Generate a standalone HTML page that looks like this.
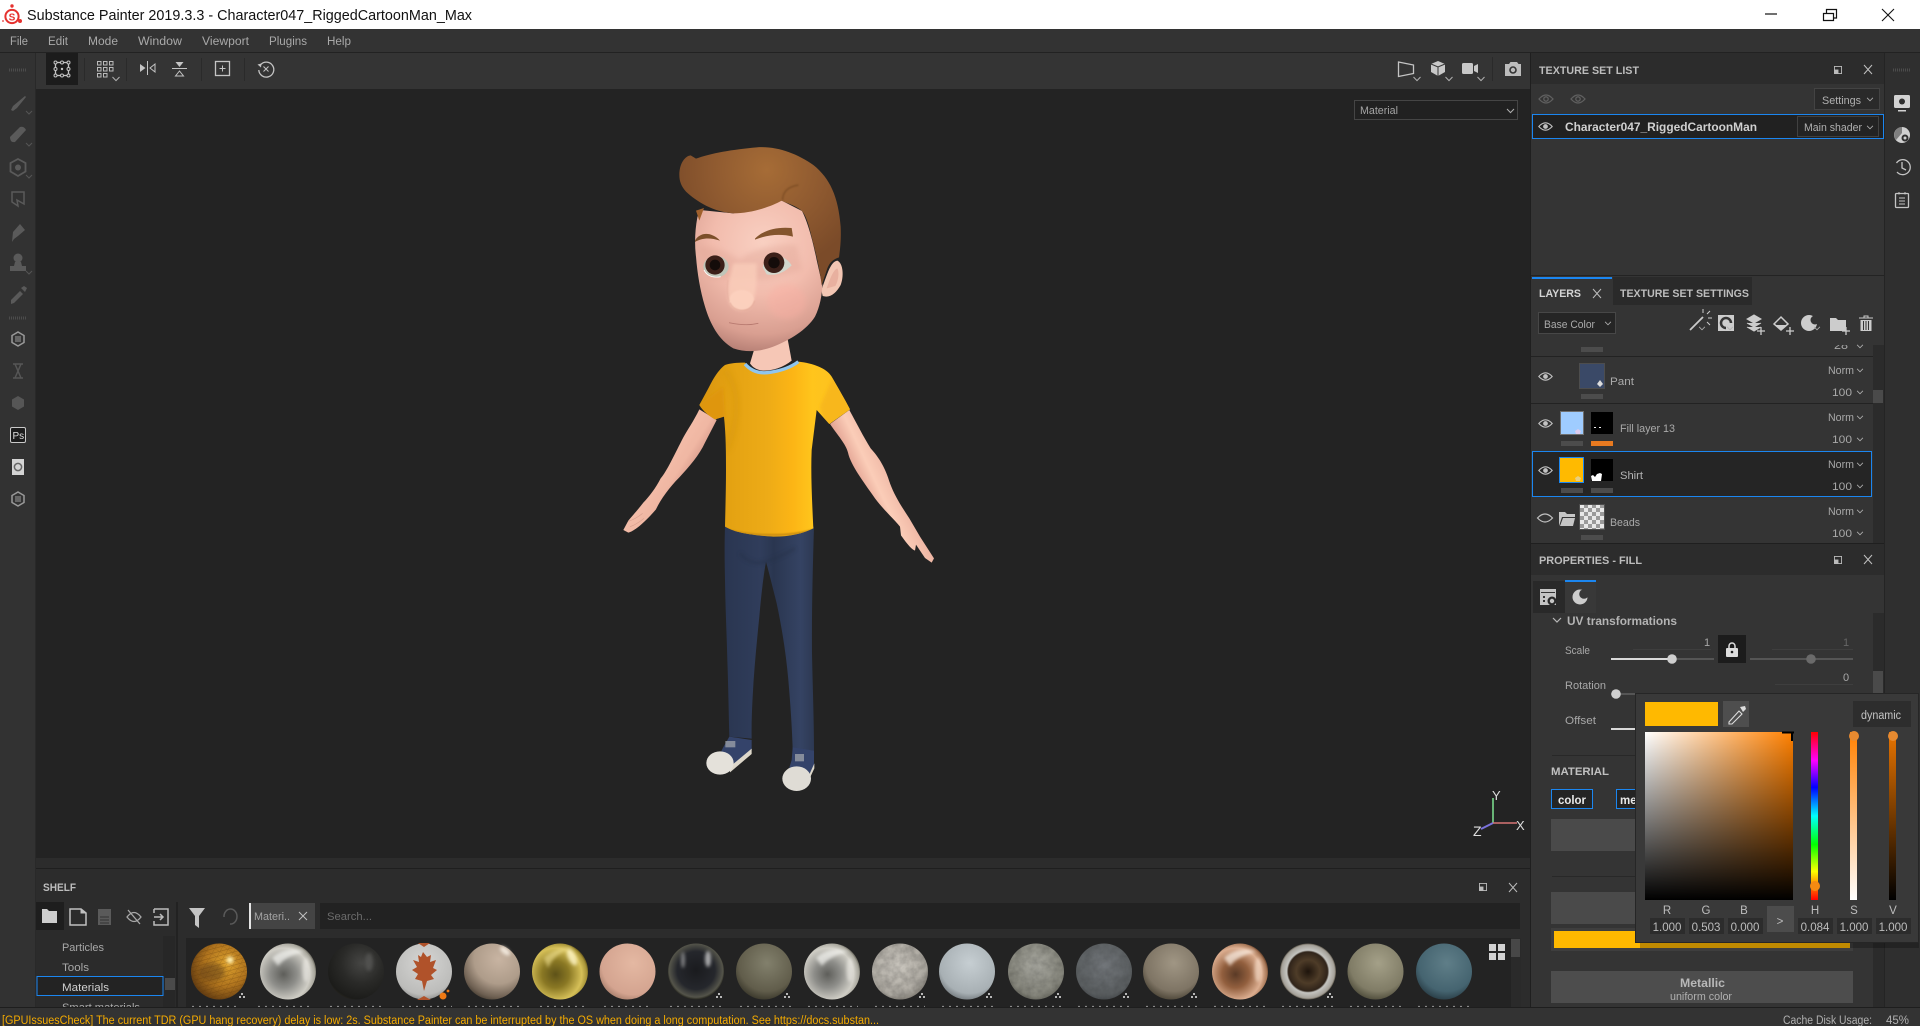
<!DOCTYPE html>
<html lang="en"><head><meta charset="utf-8"><title>Substance Painter 2019.3.3</title>
<style>
html,body{margin:0;padding:0;background:#232323;width:1920px;height:1026px;overflow:hidden}
svg{display:block}
text{font-family:"Liberation Sans",sans-serif;font-size:11px;fill:#b4b4b4}
.b{font-weight:bold}
.h{font-weight:bold;font-size:11px;fill:#bdbdbd}
.n{font-size:11px;fill:#a8a8a8}
.m{font-size:11.5px;fill:#a9a9a9}
.ic{fill:none;stroke:#c4c4c4;stroke-width:1.3}
.v{font-size:11.5px;fill:#bdbdbd;text-anchor:middle}
</style></head><body>
<svg width="1920" height="1026" viewBox="0 0 1920 1026" xmlns="http://www.w3.org/2000/svg">
<defs>
<symbol id="chev" viewBox="0 0 8 6" overflow="visible"><path d="M.5 1 4 4.6 7.5 1" fill="none" stroke="#b0b0b0" stroke-width="1"/></symbol>
<symbol id="dock" viewBox="0 0 9 9" overflow="visible"><rect x=".5" y=".5" width="8" height="8" fill="none" stroke="#bbb"/><rect x="0" y="4" width="5" height="5" fill="#bbb"/></symbol>
<symbol id="eye" viewBox="0 0 16 12" overflow="visible"><path d="M.7 6Q8-2 15.3 6 8 14 .7 6Z" fill="none" stroke="#c2c2c2" stroke-width="1.2"/><circle cx="8" cy="6" r="2.6" fill="#c2c2c2"/></symbol>
<linearGradient id="svH" x1="0" x2="1" y1="0" y2="0"><stop offset="0" stop-color="#fff"/><stop offset="1" stop-color="#ff8000"/></linearGradient>
<linearGradient id="svV" x1="0" x2="0" y1="0" y2="1"><stop offset="0" stop-color="#000" stop-opacity="0"/><stop offset="1" stop-color="#000"/></linearGradient>
<linearGradient id="hue" x1="0" x2="0" y1="0" y2="1"><stop offset="0" stop-color="#f00"/><stop offset=".17" stop-color="#f0f"/><stop offset=".33" stop-color="#00f"/><stop offset=".5" stop-color="#0ff"/><stop offset=".67" stop-color="#0f0"/><stop offset=".83" stop-color="#ff0"/><stop offset="1" stop-color="#f00"/></linearGradient>
<linearGradient id="sat" x1="0" x2="0" y1="0" y2="1"><stop offset="0" stop-color="#ff8000"/><stop offset="1" stop-color="#fff"/></linearGradient>
<linearGradient id="val" x1="0" x2="0" y1="0" y2="1"><stop offset="0" stop-color="#e87400"/><stop offset="1" stop-color="#000"/></linearGradient>
<linearGradient id="shirt" gradientUnits="userSpaceOnUse" x1="298" x2="750" y1="0" y2="0"><stop offset="0" stop-color="#d9940f"/><stop offset=".2" stop-color="#e4a212"/><stop offset=".45" stop-color="#edab17"/><stop offset=".62" stop-color="#fcb515"/><stop offset=".75" stop-color="#ffc51c"/><stop offset="1" stop-color="#fcc022"/></linearGradient>
<linearGradient id="pant" gradientUnits="userSpaceOnUse" x1="135" x2="402" y1="0" y2="0"><stop offset="0" stop-color="#2a3651"/><stop offset=".4" stop-color="#303d5b"/><stop offset=".55" stop-color="#2a3650"/><stop offset=".85" stop-color="#354363"/><stop offset="1" stop-color="#2d3953"/></linearGradient>
<radialGradient id="hair" gradientUnits="userSpaceOnUse" cx="500" cy="120" r="300"><stop offset="0" stop-color="#a66c36"/><stop offset=".55" stop-color="#8f5a30"/><stop offset="1" stop-color="#7b4b29"/></radialGradient>
<radialGradient id="face" gradientUnits="userSpaceOnUse" cx="490" cy="340" r="340"><stop offset="0" stop-color="#f9d0c2"/><stop offset=".45" stop-color="#f2bcad"/><stop offset=".8" stop-color="#d99f91"/><stop offset="1" stop-color="#b17b71"/></radialGradient>
<linearGradient id="armL" gradientUnits="userSpaceOnUse" x1="180" x2="290" y1="300" y2="370"><stop offset="0" stop-color="#f5c0ac"/><stop offset=".6" stop-color="#f0b7a3"/><stop offset="1" stop-color="#cf9284"/></linearGradient>
<linearGradient id="armR" gradientUnits="userSpaceOnUse" x1="765" x2="860" y1="375" y2="330"><stop offset="0" stop-color="#e3a494"/><stop offset=".45" stop-color="#fbcdb8"/><stop offset="1" stop-color="#eeb6a4"/></linearGradient>
<filter id="bl" x="-50%" y="-50%" width="200%" height="200%"><feGaussianBlur stdDeviation="9"/></filter>
<filter id="bm" x="-50%" y="-50%" width="200%" height="200%"><feGaussianBlur stdDeviation="5"/></filter>
<filter id="bs" x="-50%" y="-50%" width="200%" height="200%"><feGaussianBlur stdDeviation="2.5"/></filter>
<filter id="b1" x="-60%" y="-60%" width="220%" height="220%"><feGaussianBlur stdDeviation="1.6"/></filter>
<filter id="nz" x="0" y="0" width="100%" height="100%"><feTurbulence type="fractalNoise" baseFrequency=".13" numOctaves="3" seed="4"/><feColorMatrix values="0 0 0 0 0 0 0 0 0 0 0 0 0 0 0 1.6 0 0 0 -.45"/><feComposite in2="SourceGraphic" operator="in"/></filter>
<radialGradient id="s1" cx=".62" cy=".38" r=".7"><stop offset="0" stop-color="#e0a42e"/><stop offset=".55" stop-color="#b0741e"/><stop offset="1" stop-color="#5a3610"/></radialGradient>
<radialGradient id="s2" cx=".42" cy=".55" r=".6"><stop offset="0" stop-color="#5e5e5a"/><stop offset=".4" stop-color="#8e8e8a"/><stop offset=".78" stop-color="#cfcdc5"/><stop offset=".93" stop-color="#a8a69c"/><stop offset="1" stop-color="#5c5a50"/></radialGradient>
<radialGradient id="s3" cx=".6" cy=".35" r=".72"><stop offset="0" stop-color="#464644"/><stop offset=".5" stop-color="#2a2a28"/><stop offset=".9" stop-color="#1c1c1a"/><stop offset="1" stop-color="#2e2a20"/></radialGradient>
<radialGradient id="s4" cx=".5" cy=".35" r=".75"><stop offset="0" stop-color="#d6d6d4"/><stop offset=".75" stop-color="#bcbcba"/><stop offset="1" stop-color="#6e6e6c"/></radialGradient>
<radialGradient id="s5" cx=".62" cy=".28" r=".8"><stop offset="0" stop-color="#c8b4a2"/><stop offset=".55" stop-color="#ae9c8a"/><stop offset=".85" stop-color="#6e6052"/><stop offset="1" stop-color="#3c342a"/></radialGradient>
<radialGradient id="s6" cx=".42" cy=".55" r=".6"><stop offset="0" stop-color="#5e5218"/><stop offset=".4" stop-color="#8a7824"/><stop offset=".78" stop-color="#d6c058"/><stop offset=".93" stop-color="#a89438"/><stop offset="1" stop-color="#5a4c16"/></radialGradient>
<radialGradient id="s7" cx=".6" cy=".35" r=".75"><stop offset="0" stop-color="#e4b8a2"/><stop offset=".75" stop-color="#d4a490"/><stop offset="1" stop-color="#96705e"/></radialGradient>
<radialGradient id="s8" cx=".5" cy=".48" r=".52"><stop offset="0" stop-color="#1a1b1e"/><stop offset=".65" stop-color="#25272c"/><stop offset=".92" stop-color="#54544a"/><stop offset="1" stop-color="#26261e"/></radialGradient>
<radialGradient id="s9" cx=".55" cy=".35" r=".72"><stop offset="0" stop-color="#82806c"/><stop offset=".7" stop-color="#615d4b"/><stop offset="1" stop-color="#2f2d22"/></radialGradient>
<radialGradient id="s11" cx=".45" cy=".4" r=".7"><stop offset="0" stop-color="#cdc9c1"/><stop offset=".75" stop-color="#aba79f"/><stop offset="1" stop-color="#605c54"/></radialGradient>
<radialGradient id="s12" cx=".55" cy=".35" r=".72"><stop offset="0" stop-color="#c6ced2"/><stop offset=".75" stop-color="#a8b0b4"/><stop offset="1" stop-color="#62686c"/></radialGradient>
<radialGradient id="s13" cx=".5" cy=".4" r=".7"><stop offset="0" stop-color="#a8a8a0"/><stop offset=".75" stop-color="#85857b"/><stop offset="1" stop-color="#4e4e46"/></radialGradient>
<radialGradient id="s14" cx=".5" cy=".4" r=".7"><stop offset="0" stop-color="#72767a"/><stop offset=".75" stop-color="#5a5e60"/><stop offset="1" stop-color="#35383c"/></radialGradient>
<radialGradient id="s15" cx=".55" cy=".35" r=".72"><stop offset="0" stop-color="#a09684"/><stop offset=".7" stop-color="#7e7464"/><stop offset="1" stop-color="#3e382b"/></radialGradient>
<radialGradient id="s16" cx=".42" cy=".55" r=".6"><stop offset="0" stop-color="#5a3a26"/><stop offset=".4" stop-color="#925f3e"/><stop offset=".78" stop-color="#dcae90"/><stop offset=".93" stop-color="#a87858"/><stop offset="1" stop-color="#5a3622"/></radialGradient>
<radialGradient id="s17" cx=".5" cy=".5" r=".5"><stop offset="0" stop-color="#1e140c"/><stop offset=".42" stop-color="#4e3c28"/><stop offset=".7" stop-color="#30241a"/><stop offset=".76" stop-color="#c4c4c0"/><stop offset=".95" stop-color="#a4a098"/><stop offset="1" stop-color="#5a5448"/></radialGradient>
<radialGradient id="s18" cx=".55" cy=".35" r=".72"><stop offset="0" stop-color="#a4a088"/><stop offset=".7" stop-color="#807c66"/><stop offset="1" stop-color="#403e2e"/></radialGradient>
<radialGradient id="s19" cx=".55" cy=".35" r=".72"><stop offset="0" stop-color="#5f7e88"/><stop offset=".7" stop-color="#456470"/><stop offset="1" stop-color="#21323a"/></radialGradient>
<pattern id="chk" width="8" height="8" patternUnits="userSpaceOnUse"><rect width="8" height="8" fill="#e8e8e8"/><rect width="4" height="4" fill="#9a9a9a"/><rect x="4" y="4" width="4" height="4" fill="#9a9a9a"/></pattern>
<pattern id="hex" width="6" height="6" patternUnits="userSpaceOnUse" patternTransform="rotate(30)"><path d="M0 0H6M0 0V6M0 6 6 0" stroke="#5a3408" stroke-width=".6" fill="none"/></pattern>
<clipPath id="shelfclip"><rect x="186" y="938" width="1300" height="70"/></clipPath>
<clipPath id="toplist"><rect x="1531" y="345" width="342" height="11"/></clipPath>
<clipPath id="shirtclip"><path d="M435 38C410 38 390 40 375 45 355 60 340 85 325 115L298 165C310 185 330 200 345 208L372 200C378 260 378 310 378 360 378 420 376 480 375 530 400 545 440 555 520 560 570 560 610 550 640 535 636 450 632 370 635 300L650 180 688 222 750 178C730 140 712 110 695 80 680 55 640 40 595 35 570 55 530 70 490 70 470 65 450 55 435 38Z"/></clipPath>
</defs>

<!-- base -->
<rect width="1920" height="1026" fill="#232323"/>
<!-- title bar -->
<rect width="1920" height="29" fill="#fff"/>
<circle cx="12" cy="16.5" r="6.6" fill="none" stroke="#e5322f" stroke-width="2"/>
<circle cx="12" cy="6" r="1.7" fill="#e5322f"/><circle cx="20" cy="21" r="2" fill="#e5322f"/><circle cx="3" cy="21" r=".9" fill="#e5322f"/>
<text x="8.6" y="20.5" style="font-size:10px;font-weight:bold;fill:#e5322f">S</text>
<text x="27" y="20" style="font-size:15px;fill:#111" textLength="445" lengthAdjust="spacingAndGlyphs">Substance Painter 2019.3.3 - Character047_RiggedCartoonMan_Max</text>
<path d="M1765 14H1777" stroke="#111" stroke-width="1.2"/>
<path d="M1823.5 13.5H1833.5V20.5H1823.5ZM1826.5 13V9.5H1836.5V18H1834" fill="none" stroke="#111" stroke-width="1.2"/>
<path d="M1882 9 1894 21M1894 9 1882 21" stroke="#111" stroke-width="1.1"/>

<!-- menu -->
<rect y="29" width="1920" height="23" fill="#333"/>
<rect y="52" width="1920" height="1" fill="#222"/>
<text class="m" x="10" y="45" textLength="18" lengthAdjust="spacingAndGlyphs">File</text>
<text class="m" x="48" y="45" textLength="20" lengthAdjust="spacingAndGlyphs">Edit</text>
<text class="m" x="88" y="45" textLength="30" lengthAdjust="spacingAndGlyphs">Mode</text>
<text class="m" x="138" y="45" textLength="44" lengthAdjust="spacingAndGlyphs">Window</text>
<text class="m" x="202" y="45" textLength="47" lengthAdjust="spacingAndGlyphs">Viewport</text>
<text class="m" x="269" y="45" textLength="38" lengthAdjust="spacingAndGlyphs">Plugins</text>
<text class="m" x="327" y="45" textLength="24" lengthAdjust="spacingAndGlyphs">Help</text>

<!-- left strip -->
<rect y="53" width="36" height="955" fill="#323232"/>
<rect x="35" y="53" width="1" height="955" fill="#292929"/>
<path d="M9 70H27M9 318H27" stroke="#4c4c4c" stroke-width="3" stroke-dasharray="1 1"/>
<!-- tools -->
<g fill="#5a5a5a" stroke="none">
<path d="M11 110 13 106 25 96 26 97 17 108 13 111Z"/>
<path d="M10 137 20 127Q24 126 26 130L15 142Q10 143 10 137Z"/>
<path d="M18 159 25.500 163V171.500L18 176 10.500 171.500V163Z" fill="none" stroke="#5a5a5a" stroke-width="1.800"/><circle cx="18" cy="167.500" r="3"/>
<path d="M12 192H24V204L17 200 18 206 12 202Z" fill="none" stroke="#5a5a5a" stroke-width="1.500"/>
<path d="M13 232 20 224 25 230 18 236 14 239 12 242Z"/>
<circle cx="18" cy="258" r="4.500"/><path d="M15 262H21L22 266H26V271H10V266H14Z"/>
<path d="M11 300 20 291 23 294 14 303 11 304ZM21 288 25 292 27 288 24 286Z"/>
</g>
<g fill="none" stroke="#555" stroke-width="1">
<path d="M26 111 29 114 32 111M26 143 29 146 32 143M26 175 29 178 32 175M26 271 29 274 32 271"/>
</g>
<g fill="none" stroke="#9a9a9a" stroke-width="1.500">
<path d="M18 332 24 335.500V342.500L18 346 12 342.500V335.500Z"/><path d="M15 337H21M15 339H21M15 341H21" stroke-width="1"/>
<path d="M18 492 24 495.500V502.500L18 506 12 502.500V495.500Z"/><path d="M15 497H21M15 499H21M15 501H21" stroke-width="1"/>
<path d="M13 364H23M13 378H23M15 364 21 378M21 364 15 378" stroke="#565656"/>
<path d="M18 396 24 399.500V406.500L18 410 12 406.500V399.500Z" fill="#565656" stroke="none"/>
</g>
<rect x="10.500" y="427.500" width="15" height="15" rx="1.500" fill="#1c1c1c" stroke="#c8c8c8"/>
<text x="12.500" y="439" style="font-size:10px;fill:#ddd">Ps</text>
<rect x="12" y="459" width="12" height="16" fill="#d4d4d4"/><circle cx="18" cy="467" r="3.600" fill="none" stroke="#666" stroke-width="1.500"/>

<!-- toolbar -->
<rect x="36" y="53" width="1495" height="36" fill="#343434"/>
<rect x="46" y="53" width="32" height="32" fill="#1c1c1c"/>
<rect x="55.500" y="62.500" width="13" height="13" class="ic"/>
<g fill="#1c1c1c" stroke="#c4c4c4" stroke-width="1"><circle cx="55.500" cy="62.500" r="1.500"/><circle cx="62" cy="62.500" r="1.500"/><circle cx="68.500" cy="62.500" r="1.500"/><circle cx="55.500" cy="69" r="1.500"/><circle cx="68.500" cy="69" r="1.500"/><circle cx="55.500" cy="75.500" r="1.500"/><circle cx="62" cy="75.500" r="1.500"/><circle cx="68.500" cy="75.500" r="1.500"/></g>
<circle cx="62" cy="69" r="1.200" fill="#c4c4c4"/>
<g fill="none" stroke="#bbb" stroke-width="1"><rect x="97.500" y="61.500" width="3.500" height="3.500"/><rect x="103.500" y="61.500" width="3.500" height="3.500"/><rect x="109.500" y="61.500" width="3.500" height="3.500"/><rect x="97.500" y="67.500" width="3.500" height="3.500"/><rect x="103.500" y="67.500" width="3.500" height="3.500"/><rect x="109.500" y="67.500" width="3.500" height="3.500"/><rect x="97.500" y="73.500" width="3.500" height="3.500"/><rect x="103.500" y="73.500" width="3.500" height="3.500"/></g>
<use href="#chev" x="112" y="76" width="8" height="6"/>
<path d="M84.500 58V81M126.500 58V81M201.500 58V81M244.500 58V81M1492.500 57V81" stroke="#2a2a2a"/>
<path d="M147.500 61V75" stroke="#c4c4c4"/><path d="M140 64V72L145.500 68Z" fill="#c4c4c4"/><path d="M155 64V72L150 68Z" fill="none" stroke="#c4c4c4"/>
<path d="M172 68.500H187" stroke="#c4c4c4"/><path d="M175.500 62H183.500L179.500 67Z" fill="#c4c4c4"/><path d="M175.500 76H183.500L179.500 71Z" fill="none" stroke="#c4c4c4"/>
<rect x="215.500" y="61.500" width="14" height="14" class="ic"/><path d="M222.500 65.500V71.500M219.500 68.500H225.500" stroke="#c4c4c4"/>
<path d="M260.800 64.500A7.500 7.500 0 1 1 258.800 70" class="ic" stroke-width="1.500"/><path d="M257.500 64.500 261.500 63.500 261 67.500Z" fill="#c4c4c4"/><path d="M263.500 66.500 268.500 71.500M268.500 66.500 263.500 71.500" stroke="#c4c4c4"/>
<!-- right toolbar icons -->
<path d="M1398.500 62 1413.500 65V73.500L1398.500 76.500Z" fill="none" stroke="#c4c4c4" stroke-width="1.300"/>
<path d="M1431 64 1438 61 1445 64V72L1438 76 1431 72Z" fill="#c8c8c8"/><path d="M1431 64 1438 67 1445 64M1438 67V76" stroke="#343434" fill="none"/>
<rect x="1462" y="63" width="11" height="11" rx="1.500" fill="#c8c8c8"/><path d="M1474 66 1478 64V73L1474 71Z" fill="#c8c8c8"/>
<use href="#chev" x="1413" y="76" width="8" height="6"/><use href="#chev" x="1445" y="76" width="8" height="6"/><use href="#chev" x="1477" y="76" width="8" height="6"/>
<path d="M1505 64H1509L1510.500 62H1517L1518.500 64H1521V76H1505Z" fill="#bcbcbc"/><circle cx="1513" cy="70" r="3.800" fill="#343434"/><circle cx="1513" cy="70" r="2.200" fill="#bcbcbc"/>

<!-- viewport -->
<rect x="36" y="89" width="1494" height="769" fill="#232323"/>
<rect x="1354.500" y="100.500" width="163" height="19" fill="#212121" stroke="#454545"/>
<text x="1360" y="114" style="font-size:11px;fill:#a4a4a4" textLength="38" lengthAdjust="spacingAndGlyphs">Material</text>
<use href="#chev" x="1506" y="108" width="9" height="6"/>

<!-- character -->
<g transform="translate(600 350) scale(.33333)">
 <!-- left arm -->
 <path d="M298 178C280 215 262 240 250 262 225 310 200 365 182 385 167 415 147 440 130 458 113 480 95 500 85 512L70 540 85 548C100 545 130 522 168 478 182 448 208 412 238 382 268 350 298 315 315 278L350 210Z" fill="url(#armL)"/>
 <path d="M85 514C100 510 115 500 128 490M90 530C105 525 120 515 132 505" stroke="#d9a08e" fill="none" stroke-width="2"/>
 <!-- right arm -->
 <path d="M690 222C712 255 738 282 744 308 752 345 790 395 825 445 858 488 885 510 900 530L903 556C915 572 930 595 945 602L948 584 975 624 995 638 1002 625 960 560 928 505C905 470 885 440 870 400 855 350 835 320 812 295 790 260 770 220 748 180Z" fill="url(#armR)"/>
</g>
<g transform="translate(680 520) scale(.33333)">
 <!-- pants -->
 <path d="M135 20C133 80 134 130 135 180 136 260 140 340 142 420 145 500 146 580 148 650L215 656C214 610 216 570 218 530 222 450 230 370 238 290 243 230 250 170 258 125 270 170 280 210 290 250 305 320 318 400 325 480 331 550 336 620 338 685L402 692C402 600 398 500 396 400 395 280 398 150 402 20Z" fill="url(#pant)"/>
 <path d="M180 100C210 135 235 130 258 125 290 115 320 100 345 85" fill="none" stroke="#273248" stroke-width="10" opacity=".5" filter="url(#bm)"/>
 <!-- shoes -->
 <path d="M148 650 215 660 215 690 155 738 115 712 128 685Z" fill="#34436a"/>
 <rect x="136" y="663" width="30" height="19" fill="#a8abb0" opacity=".7"/>
 <path d="M150 757 215 702V686L150 740Z" fill="#ddd7ca"/>
 <ellipse cx="120" cy="729" rx="41" ry="35" fill="#e4e1da"/>
 <path d="M338 682 402 692 402 745 378 772 322 762 335 720Z" fill="#34436a"/>
 <rect x="345" y="702" width="27" height="22" fill="#a8abb0" opacity=".7"/>
 <path d="M382 790 403 745 403 730 385 770Z" fill="#ddd7ca"/>
 <ellipse cx="350" cy="776" rx="43" ry="37" fill="#dfdcd5"/>
</g>
<g transform="translate(600 350) scale(.33333)">
 <!-- shirt -->
 <path d="M435 38C410 38 390 40 375 45 355 60 340 85 325 115L298 165C310 185 330 200 345 208L372 200C378 260 378 310 378 360 378 420 376 480 375 530 400 545 440 555 520 560 570 560 610 550 640 535 636 450 632 370 635 300L650 180 688 222 750 178C730 140 712 110 695 80 680 55 640 40 595 35 570 55 530 70 490 70 470 65 450 55 435 38Z" fill="url(#shirt)"/>
 <g clip-path="url(#shirtclip)">
  <path d="M290 170 345 215 375 205 370 110Z" fill="#df960d" filter="url(#bm)"/>
  <path d="M660 170 680 240 770 180 700 80Z" fill="#f8b71a" filter="url(#bm)"/>
  <path d="M370 535C420 556 560 565 645 538" fill="none" stroke="#c98c10" stroke-width="6" filter="url(#bs)"/>
  <path d="M375 60C420 120 420 200 380 300" fill="none" stroke="#cf920f" stroke-width="14" opacity=".4" filter="url(#bl)"/>
 </g>
</g>
<g transform="translate(600 130) scale(.33333)">
 <!-- neck -->
 <path d="M465 650 562 622 575 692C550 712 520 722 490 722 470 720 458 712 450 700Z" fill="#f6c7b6"/>
 <path d="M435 702C455 725 480 732 510 727 545 722 575 710 595 695" fill="none" stroke="#90c6ee" stroke-width="10"/>
 <!-- ear -->
 <path d="M664 480C680 440 690 395 712 392 730 400 732 440 722 465 708 490 690 505 668 498Z" fill="#f3c6b3"/>
 <path d="M680 475C690 445 700 420 712 415 718 425 716 450 706 468Z" fill="#e8b09f"/>
 <!-- face -->
 <path d="M292 262C285 300 283 340 288 380 292 430 300 480 315 530 330 580 355 630 400 655 440 668 480 665 520 650 570 630 620 600 645 560 660 530 666 495 667 465L650 390C640 340 625 280 606 243L545 212 400 250 300 240Z" fill="url(#face)"/>
 <path d="M295 352C350 340 400 380 420 390 450 360 520 340 590 345L605 420 500 450 330 445Z" fill="#dda091" opacity=".35" filter="url(#bl)"/>
 <ellipse cx="560" cy="515" rx="58" ry="52" fill="#faaea2" opacity=".4" filter="url(#bl)"/>
 <path d="M400 400C385 450 380 500 388 515 395 540 425 548 445 535 465 520 472 470 470 400Z" fill="#fbcfbb" opacity=".75" filter="url(#bm)"/>
 <ellipse cx="425" cy="510" rx="37" ry="30" fill="#fdd2bf" opacity=".85" filter="url(#bs)"/>
 <path d="M390 518C400 540 425 546 445 537 455 530 460 525 464 512" fill="none" stroke="#d89a88" stroke-width="3" opacity=".55" filter="url(#b1)"/>
 <path d="M384 450C380 480 382 500 388 515" fill="none" stroke="#dfa595" stroke-width="3" opacity=".5" filter="url(#b1)"/>
 <!-- eyes -->
 <ellipse cx="348" cy="410" rx="38" ry="32" fill="#bfc5b8"/>
 <path d="M312 420C322 440 340 444 362 440" fill="none" stroke="#fff" stroke-width="2.500"/>
 <circle cx="345" cy="405" r="29" fill="#3c2019"/><circle cx="345" cy="405" r="16" fill="#140c0a"/>
 <path d="M488 412C495 385 510 372 530 372 555 382 568 395 575 406 550 430 525 438 500 433Z" fill="#d2d6cc"/>
 <circle cx="522" cy="398" r="31" fill="#3c2019"/><circle cx="522" cy="398" r="17" fill="#140c0a"/>
 <!-- brows -->
 <path d="M285 332C300 305 335 305 360 332 330 322 305 324 285 336Z" fill="#7c4f2a"/>
 <path d="M465 326C490 300 530 290 575 294L579 320C540 310 500 315 465 329Z" fill="#84552d"/>
 <path d="M387 578C420 585 450 586 475 580" fill="none" stroke="#b87a70" stroke-width="2.500"/>
 <!-- hair -->
 <path d="M288 242 312 234 298 272Z" fill="#a0602c"/>
 <path d="M238 135C238 100 255 78 272 76L288 86C330 70 400 58 470 52 530 48 590 70 640 105 690 145 715 200 722 290 724 330 720 360 717 382 700 388 690 395 682 415L665 466C660 420 650 380 640 340 630 300 622 262 606 243 590 228 565 222 545 212 510 232 450 250 400 250 340 246 290 215 258 185 245 170 238 155 238 135Z" fill="url(#hair)"/>
 <path d="M548 210C548 185 565 170 595 165" fill="none" stroke="#6e421f" stroke-width="5" opacity=".5" filter="url(#bs)"/>
</g>

<!-- gizmo -->
<path d="M1493 823V798" stroke="#7ad88a" stroke-width="1.600"/>
<path d="M1493 823H1517" stroke="#d87474" stroke-width="1.600"/>
<path d="M1493 823 1481 829" stroke="#7a72dc" stroke-width="2"/>
<text x="1492" y="800" style="font-size:13px;fill:#ddd">Y</text>
<text x="1516" y="830" style="font-size:13px;fill:#ddd">X</text>
<text x="1473" y="836" style="font-size:14px;fill:#ddd">Z</text>

<!-- shelf -->
<rect x="36" y="858" width="1494" height="150" fill="#2c2c2c"/>
<rect x="36" y="868" width="1494" height="1" fill="#1f1f1f"/>
<text class="h" x="43" y="891" textLength="33" lengthAdjust="spacingAndGlyphs">SHELF</text>
<use href="#dock" x="1479" y="883" width="8" height="8"/>
<path d="M1509 883 1517 892M1517 883 1509 892" stroke="#bbb" stroke-width="1"/>
<rect x="36" y="902" width="28" height="28" fill="#1e1e1e"/>
<path d="M42 909H47L49 911H57V923H42Z" fill="#cdcdcd"/>
<path d="M70 909H81L86 913V925H70Z" fill="none" stroke="#c0c0c0" stroke-width="1.500"/><path d="M81 909V913H86" fill="#c0c0c0" stroke="#c0c0c0"/>
<path d="M98 909H111V925H98Z" fill="#5a5a5a"/><path d="M100 917H109M100 920H109M100 923H109" stroke="#333"/>
<path d="M127 917Q134 908 141 917 134 926 127 917ZM128 910 140 924" fill="none" stroke="#a8a8a8" stroke-width="1.300"/>
<path d="M154 909H168V925H154V921M154 913V909" fill="none" stroke="#bbb" stroke-width="1.500"/><path d="M154 917H163M160 914 163 917 160 920" fill="none" stroke="#bbb" stroke-width="1.500"/>
<rect x="176" y="902" width="2" height="106" fill="#222"/>
<rect x="36" y="930" width="140" height="78" fill="#2b2b2b"/>
<rect x="163" y="936" width="12" height="72" fill="#272727"/><rect x="165" y="978" width="10" height="12" fill="#4a4a4a"/>
<text class="n" x="62" y="951" textLength="42" lengthAdjust="spacingAndGlyphs">Particles</text>
<text class="n" x="62" y="971" textLength="27" lengthAdjust="spacingAndGlyphs">Tools</text>
<rect x="37" y="976.500" width="126" height="19" fill="#232323" stroke="#1b86f0"/>
<text x="62" y="991" style="font-size:11px;fill:#d0d0d0" textLength="47" lengthAdjust="spacingAndGlyphs">Materials</text>
<text class="n" x="62" y="1011" textLength="78" lengthAdjust="spacingAndGlyphs">Smart materials</text>
<path d="M189 908H205L199 916V928L195 925V916Z" fill="#c4c4c4"/>
<path d="M224 917A6.500 7.500 0 1 1 230 924" fill="none" stroke="#595959" stroke-width="1.500"/>
<rect x="249" y="903" width="66" height="26" fill="#444"/><rect x="249" y="903" width="2" height="26" fill="#e4e4e4"/>
<text x="254" y="920" style="font-size:11px;fill:#a4a4a4" textLength="36" lengthAdjust="spacingAndGlyphs">Materi..</text>
<path d="M299 912 307 920M307 912 299 920" stroke="#c0c0c0"/>
<rect x="320" y="903" width="1200" height="26" fill="#222"/>
<text x="327" y="920" style="font-size:11px;fill:#6c6c6c" textLength="45" lengthAdjust="spacingAndGlyphs">Search...</text>
<rect x="186" y="938" width="1335" height="70" fill="#232323"/>
<rect x="1511" y="938" width="10" height="70" fill="#2a2a2a"/><rect x="1511" y="939" width="9" height="18" fill="#474747"/>
<g fill="#d2d2d2"><rect x="1489" y="944" width="7" height="7"/><rect x="1498" y="944" width="7" height="7"/><rect x="1489" y="953" width="7" height="7"/><rect x="1498" y="953" width="7" height="7"/></g>
<g clip-path="url(#shelfclip)">
 <circle cx="219" cy="971.500" r="28" fill="url(#s1)"/><circle cx="219" cy="971.500" r="28" fill="url(#hex)" opacity=".4"/>
 <ellipse cx="212" cy="972" rx="13" ry="9" fill="#5a3a12" opacity=".5" filter="url(#bs)"/><circle cx="230" cy="960" r="3.500" fill="#fff0b0" filter="url(#b1)"/>
 <circle cx="288" cy="971.500" r="28" fill="url(#s2)"/>
 <path d="M272 958C280 950 294 947 304 952 294 954 284 958 278 966Z" fill="#f6f6f2" opacity=".7" filter="url(#b1)"/><ellipse cx="306" cy="970" rx="3.500" ry="12" fill="#f0eee8" opacity=".6" filter="url(#b1)"/>
 <circle cx="356" cy="971.500" r="28" fill="url(#s3)"/><ellipse cx="369" cy="962" rx="4" ry="9" fill="#5a5a58" opacity=".7" filter="url(#b1)"/>
 <circle cx="424" cy="971.500" r="28" fill="url(#s4)"/>
 <path d="M423 952 427 957 431 955 430 962 436 960 433 968 437 970 431 975 434 979 427 981 424 991 422 981 415 979 418 974 412 970 417 967 413 960 419 962 418 955 421 957Z" fill="#b0522a"/>
 <path d="M418 943H430L424 947ZM417 1000 424 996 431 1000Z" fill="#b0522a"/>
 <circle cx="492" cy="971.500" r="28" fill="url(#s5)"/><ellipse cx="505" cy="951" rx="6" ry="3" transform="rotate(40 505 951)" fill="#f0e6da" filter="url(#b1)"/>
 <circle cx="560" cy="971.500" r="28" fill="url(#s6)"/><ellipse cx="572" cy="957" rx="4" ry="9" transform="rotate(-25 572 957)" fill="#fff6c8" opacity=".8" filter="url(#b1)"/><path d="M544 958C552 950 565 946 572 948 560 952 552 958 548 968Z" fill="#f0e090" opacity=".6" filter="url(#b1)"/>
 <circle cx="627.500" cy="971.500" r="28" fill="url(#s7)"/>
 <circle cx="696" cy="971.500" r="28" fill="url(#s8)"/><ellipse cx="708" cy="959" rx="3" ry="8" fill="#e0e0e0" opacity=".7" filter="url(#b1)"/><ellipse cx="683" cy="960" rx="2" ry="8" fill="#bbb" opacity=".6" filter="url(#b1)"/>
 <circle cx="764" cy="971.500" r="28" fill="url(#s9)"/>
 <circle cx="832" cy="971.500" r="28" fill="url(#s2)"/><path d="M816 958C824 950 838 947 848 952 838 954 828 958 822 966Z" fill="#f6f6f2" opacity=".7" filter="url(#b1)"/><ellipse cx="850" cy="970" rx="3.500" ry="12" fill="#f0eee8" opacity=".6" filter="url(#b1)"/>
 <circle cx="900" cy="971.500" r="28" fill="url(#s11)"/><circle cx="900" cy="971.500" r="28" fill="#000" filter="url(#nz)" opacity=".22"/>
 <circle cx="967" cy="971.500" r="28" fill="url(#s12)"/>
 <circle cx="1036" cy="971.500" r="28" fill="url(#s13)"/><circle cx="1036" cy="971.500" r="28" fill="#000" filter="url(#nz)" opacity=".18"/>
 <circle cx="1104" cy="971.500" r="28" fill="url(#s14)"/><circle cx="1104" cy="971.500" r="28" fill="#000" filter="url(#nz)" opacity=".12"/>
 <circle cx="1171" cy="971.500" r="28" fill="url(#s15)"/>
 <circle cx="1240" cy="971.500" r="28" fill="url(#s16)"/><path d="M1224 958C1232 950 1246 947 1256 952 1246 954 1236 958 1230 966Z" fill="#fff4ea" opacity=".7" filter="url(#b1)"/><ellipse cx="1258" cy="970" rx="3.500" ry="12" fill="#fbe4d2" opacity=".6" filter="url(#b1)"/>
 <circle cx="1308" cy="971.500" r="28" fill="url(#s17)"/>
 <circle cx="1375.500" cy="971.500" r="28" fill="url(#s18)"/>
 <circle cx="1444" cy="971.500" r="28" fill="url(#s19)"/>
 <!-- badges -->
 <g fill="#232323">
  <path d="M231 1001 249 982V1001ZM436 1001 454 982V1001ZM708 1001 726 982V1001ZM776 1001 794 982V1001ZM912 1001 930 982V1001ZM979 1001 997 982V1001ZM1048 1001 1066 982V1001ZM1116 1001 1134 982V1001ZM1183 1001 1201 982V1001ZM1320 1001 1338 982V1001Z"/>
 </g>
 <g fill="#b8b8b8">
  <rect x="241" y="993" width="2" height="2"/><rect x="239" y="996" width="2" height="2"/><rect x="243" y="996" width="2" height="2"/>
  <rect x="718" y="993" width="2" height="2"/><rect x="716" y="996" width="2" height="2"/><rect x="720" y="996" width="2" height="2"/>
  <rect x="786" y="993" width="2" height="2"/><rect x="784" y="996" width="2" height="2"/><rect x="788" y="996" width="2" height="2"/>
  <rect x="921" y="993" width="2" height="2"/><rect x="919" y="996" width="2" height="2"/><rect x="923" y="996" width="2" height="2"/>
  <rect x="988" y="993" width="2" height="2"/><rect x="986" y="996" width="2" height="2"/><rect x="990" y="996" width="2" height="2"/>
  <rect x="1057" y="993" width="2" height="2"/><rect x="1055" y="996" width="2" height="2"/><rect x="1059" y="996" width="2" height="2"/>
  <rect x="1125" y="993" width="2" height="2"/><rect x="1123" y="996" width="2" height="2"/><rect x="1127" y="996" width="2" height="2"/>
  <rect x="1193" y="993" width="2" height="2"/><rect x="1191" y="996" width="2" height="2"/><rect x="1195" y="996" width="2" height="2"/>
  <rect x="1329" y="993" width="2" height="2"/><rect x="1327" y="996" width="2" height="2"/><rect x="1331" y="996" width="2" height="2"/>
 </g>
 <circle cx="443" cy="996" r="3.500" fill="#f07a14"/><circle cx="448" cy="991" r="1.400" fill="#f07a14"/>
 <path d="M192 1006.500H240M258 1006.500H310M330 1006.500H385M402 1006.500H452M468 1006.500H520M540 1006.500H585M604 1006.500H650M670 1006.500H722M740 1006.500H792M808 1006.500H858M875 1006.500H925M942 1006.500H994M1010 1006.500H1062M1078 1006.500H1130M1146 1006.500H1198M1214 1006.500H1266M1282 1006.500H1334M1350 1006.500H1402M1418 1006.500H1470" stroke="#8a8a8a" stroke-width="1.200" stroke-dasharray="2 5"/>
</g>

<!-- right column -->
<rect x="1530" y="53" width="355" height="955" fill="#343434"/>
<rect x="1530" y="53" width="1" height="955" fill="#1f1f1f"/>
<rect x="1885" y="53" width="35" height="955" fill="#2f2f2f"/>
<rect x="1884" y="53" width="1" height="955" fill="#242424"/>
<path d="M1893 70H1911" stroke="#4c4c4c" stroke-width="3" stroke-dasharray="1 1"/>
<!-- right strip icons -->
<rect x="1894" y="95" width="16" height="13" rx="1.500" fill="#d2d2d2"/><circle cx="1902" cy="101.500" r="3" fill="#2f2f2f"/><rect x="1898" y="110" width="8" height="1.500" fill="#d2d2d2"/>
<circle cx="1902" cy="135" r="8" fill="#cfcfcf"/><path d="M1902 127A8 8 0 0 0 1896 140L1902 133Z" fill="#2f2f2f" opacity=".5"/><circle cx="1905" cy="138" r="3.500" fill="#2f2f2f"/><circle cx="1905" cy="138" r="1.500" fill="#cfcfcf"/>
<path d="M1896.500 163A7.500 7.500 0 1 1 1897 172" class="ic" stroke-width="1.500"/><path d="M1902 162V168L1906 170" class="ic"/>
<rect x="1895.500" y="193.500" width="13" height="14" rx="1" class="ic"/><path d="M1899 198H1905M1899 201H1905M1899 204H1905M1899 192V194.500M1905 192V194.500" stroke="#c4c4c4"/>

<!-- texture set list -->
<rect x="1531" y="53" width="353" height="31" fill="#2c2c2c"/>
<text class="h" x="1539" y="74" textLength="100" lengthAdjust="spacingAndGlyphs">TEXTURE SET LIST</text>
<use href="#dock" x="1834" y="66" width="8" height="8"/>
<path d="M1864 65 1872 74M1872 65 1864 74" stroke="#c0c0c0"/>
<path d="M1539 99Q1546 91 1553 99 1546 107 1539 99Z" fill="none" stroke="#606060" stroke-width="1.300"/><circle cx="1546" cy="99" r="2.200" fill="none" stroke="#606060" stroke-width="1.300"/>
<path d="M1571 99Q1578 91 1585 99 1578 107 1571 99Z" fill="none" stroke="#606060" stroke-width="1.300"/><circle cx="1578" cy="99" r="2.200" fill="none" stroke="#606060" stroke-width="1.300"/>
<rect x="1814.500" y="88.500" width="65" height="21" fill="#2a2a2a" stroke="#434343"/>
<text x="1822" y="104" style="font-size:11px;fill:#b0b0b0" textLength="39" lengthAdjust="spacingAndGlyphs">Settings</text>
<use href="#chev" x="1866" y="97" width="8" height="5"/>
<rect x="1532.500" y="114.500" width="351" height="24" fill="#212121" stroke="#1b86f0"/>
<use href="#eye" x="1538" y="121" width="15" height="11"/>
<text x="1565" y="131" style="font-size:11.500px;font-weight:bold;fill:#d0d0d0" textLength="192" lengthAdjust="spacingAndGlyphs">Character047_RiggedCartoonMan</text>
<rect x="1797.500" y="116.500" width="81" height="20" fill="#232323" stroke="#414141"/>
<text x="1804" y="131" style="font-size:11px;fill:#b0b0b0" textLength="58" lengthAdjust="spacingAndGlyphs">Main shader</text>
<use href="#chev" x="1866" y="125" width="8" height="5"/>
<rect x="1531" y="275" width="353" height="1" fill="#232323"/>

<!-- layers -->
<rect x="1532" y="277" width="80" height="2" fill="#1b86f0"/>
<text x="1539" y="297" style="font-size:11px;font-weight:bold;fill:#d4d4d4" textLength="42" lengthAdjust="spacingAndGlyphs">LAYERS</text>
<path d="M1593 289 1601 298M1601 289 1593 298" stroke="#bcbcbc"/>
<rect x="1613" y="277" width="139" height="28" fill="#2a2a2a"/>
<text x="1620" y="297" class="h" textLength="129" lengthAdjust="spacingAndGlyphs">TEXTURE SET SETTINGS</text>
<rect x="1538.500" y="312.500" width="77" height="21" fill="#252525" stroke="#474747"/>
<text x="1544" y="328" style="font-size:11px;fill:#aaa" textLength="51" lengthAdjust="spacingAndGlyphs">Base Color</text>
<use href="#chev" x="1604" y="321" width="8" height="5"/>
<!-- layer icons -->
<path d="M1690 330 1703 317" stroke="#ccc" stroke-width="1.800"/><path d="M1703 313V309M1708 318H1712M1707 314 1710 311M1707 322 1710 325" stroke="#ccc"/><use href="#chev" x="1698" y="326" width="8" height="5"/>
<path d="M1718 315H1734V331H1718Z" fill="#ccc"/><path d="M1731 323A5 5 0 1 0 1726 328" fill="none" stroke="#343434" stroke-width="2.500"/><use href="#chev" x="1726" y="326" width="8" height="5"/>
<path d="M1747 319 1754 315 1761 319 1754 323ZM1747 323 1754 327 1761 323M1747 327 1754 331 1761 327" fill="#ccc" stroke="#ccc"/><path d="M1757 331H1765M1761 327V335" stroke="#ccc" stroke-width="1.300"/>
<path d="M1774 324 1781 317 1788 324 1781 330Z" fill="none" stroke="#ccc" stroke-width="1.500"/><path d="M1775 325H1787L1781 330Z" fill="#ccc"/><path d="M1786 331H1794M1790 327V335" stroke="#ccc" stroke-width="1.300"/>
<circle cx="1809" cy="323" r="8" fill="#ccc"/><circle cx="1815" cy="320" r="4.500" fill="#343434"/><use href="#chev" x="1813" y="326" width="8" height="5"/>
<path d="M1830 318H1836L1838 320H1846V331H1830Z" fill="#ccc"/><path d="M1842 331H1850M1846 327V335" stroke="#ccc" stroke-width="1.300"/>
<path d="M1859 318H1873M1864 318V316H1868V318" stroke="#ccc" fill="none"/><path d="M1860.500 320H1871.500V331H1860.500Z" fill="#ccc"/><path d="M1863.500 321V330M1866 321V330M1868.500 321V330" stroke="#343434"/>

<rect x="1531" y="345" width="342" height="198" fill="#343434"/>
<rect x="1873" y="345" width="11" height="198" fill="#2b2b2b"/><rect x="1873" y="390" width="10" height="13" fill="#4a4a4a"/>
<rect x="1581" y="347" width="22" height="5" fill="#4c4c4c"/>
<g clip-path="url(#toplist)"><text class="n" x="1834" y="349" textLength="14" lengthAdjust="spacingAndGlyphs">28</text></g><use href="#chev" x="1856" y="344" width="8" height="5"/>
<rect x="1531" y="356" width="342" height="1" fill="#222"/>
<rect x="1531" y="403" width="342" height="1" fill="#222"/>
<!-- Pant -->
<use href="#eye" x="1538" y="371" width="15" height="11"/>
<rect x="1579.500" y="363.500" width="25" height="25" fill="#3a4967" stroke="#4d4d4d"/>
<path d="M1597 384 1600 380 1603 384 1600 387Z" fill="#ddd"/>
<rect x="1581" y="394" width="22" height="5" fill="#4c4c4c"/>
<text x="1610" y="385" style="font-size:11px;fill:#aaa" textLength="24" lengthAdjust="spacingAndGlyphs">Pant</text>
<text class="n" x="1828" y="374" textLength="26" lengthAdjust="spacingAndGlyphs">Norm</text><use href="#chev" x="1856" y="368" width="8" height="5"/>
<text class="n" x="1832" y="396" textLength="20" lengthAdjust="spacingAndGlyphs">100</text><use href="#chev" x="1856" y="390" width="8" height="5"/>
<!-- Fill layer 13 -->
<use href="#eye" x="1538" y="418" width="15" height="11"/>
<rect x="1560.500" y="411.500" width="23" height="23" fill="#9fccff" stroke="#6f6f6f"/>
<path d="M1575 431 1578 429 1581 431 1580 434H1576Z" fill="#dce"/>
<rect x="1591" y="412" width="22" height="22" fill="#000"/><rect x="1594" y="427" width="2" height="1" fill="#eee"/><rect x="1599" y="427" width="2" height="1" fill="#eee"/>
<rect x="1561" y="441" width="22" height="5" fill="#4c4c4c"/><rect x="1591" y="441" width="22" height="5" fill="#e87a20"/>
<text x="1620" y="432" style="font-size:11px;fill:#aaa" textLength="55" lengthAdjust="spacingAndGlyphs">Fill layer 13</text>
<text class="n" x="1828" y="421" textLength="26" lengthAdjust="spacingAndGlyphs">Norm</text><use href="#chev" x="1856" y="415" width="8" height="5"/>
<text class="n" x="1832" y="443" textLength="20" lengthAdjust="spacingAndGlyphs">100</text><use href="#chev" x="1856" y="437" width="8" height="5"/>
<!-- Shirt -->
<rect x="1532.500" y="451.500" width="339" height="45" fill="#252525" stroke="#1b86f0"/>
<use href="#eye" x="1538" y="465" width="15" height="11"/>
<rect x="1559.500" y="457.500" width="24" height="25" fill="#ffba00" stroke="#1b86f0"/>
<path d="M1575 478 1578 476 1581 478 1580 481H1576Z" fill="#e8cf80"/>
<rect x="1591" y="459" width="22" height="22" fill="#000"/><path d="M1591 476 1593 475 1595 477 1597 474 1600 473 1602 474 1601 481H1592Z" fill="#fff"/>
<rect x="1561" y="488" width="22" height="5" fill="#4c4c4c"/><rect x="1591" y="488" width="22" height="5" fill="#4c4c4c"/>
<text x="1620" y="479" style="font-size:11px;fill:#b4b4b4" textLength="23" lengthAdjust="spacingAndGlyphs">Shirt</text>
<text class="n" x="1828" y="468" textLength="26" lengthAdjust="spacingAndGlyphs">Norm</text><use href="#chev" x="1856" y="462" width="8" height="5"/>
<text class="n" x="1832" y="490" textLength="20" lengthAdjust="spacingAndGlyphs">100</text><use href="#chev" x="1856" y="484" width="8" height="5"/>
<!-- Beads -->
<path d="M1537.500 518Q1545 510 1552.500 518 1545 526 1537.500 518Z" fill="none" stroke="#c2c2c2" stroke-width="1.200"/>
<path d="M1559 512H1565L1567 514H1575V517H1562L1559 526Z" fill="#c6c6c6"/><path d="M1563 518H1575L1573 526H1560Z" fill="#c6c6c6"/>
<rect x="1579.500" y="504.500" width="25" height="25" fill="url(#chk)" stroke="#4d4d4d"/>
<rect x="1581" y="535" width="22" height="5" fill="#4c4c4c"/>
<text x="1610" y="526" style="font-size:11px;fill:#aaa" textLength="30" lengthAdjust="spacingAndGlyphs">Beads</text>
<text class="n" x="1828" y="515" textLength="26" lengthAdjust="spacingAndGlyphs">Norm</text><use href="#chev" x="1856" y="509" width="8" height="5"/>
<text class="n" x="1832" y="537" textLength="20" lengthAdjust="spacingAndGlyphs">100</text><use href="#chev" x="1856" y="531" width="8" height="5"/>

<!-- properties -->
<rect x="1531" y="543" width="353" height="32" fill="#2c2c2c"/><rect x="1531" y="543" width="353" height="1" fill="#1f1f1f"/>
<text class="h" x="1539" y="564" textLength="103" lengthAdjust="spacingAndGlyphs">PROPERTIES - FILL</text>
<use href="#dock" x="1834" y="556" width="8" height="8"/>
<path d="M1864 555 1872 564M1872 555 1864 564" stroke="#c0c0c0"/>
<rect x="1533" y="581" width="32" height="32" fill="#292929"/>
<rect x="1565" y="580" width="31" height="33" fill="#383838"/><rect x="1565" y="580" width="31" height="2" fill="#1b86f0"/>
<path d="M1540 589H1556V605H1540Z" fill="#c4c4c4"/><rect x="1541" y="592" width="14" height="1" fill="#333"/><rect x="1543" y="596" width="2" height="2" fill="#333"/><rect x="1543" y="600" width="2" height="2" fill="#333"/><circle cx="1552" cy="601" r="4.500" fill="#292929"/><circle cx="1552" cy="601" r="2.200" fill="#c4c4c4"/>
<circle cx="1580" cy="597" r="7.500" fill="#cdcdcd"/><circle cx="1584" cy="594" r="4.800" fill="#383838"/>
<rect x="1531" y="613" width="342" height="395" fill="#343434"/>
<rect x="1873" y="613" width="11" height="395" fill="#2b2b2b"/><rect x="1873" y="671" width="10" height="30" fill="#4a4a4a"/>
<path d="M1553 618 1557 622 1561 618" fill="none" stroke="#b8b8b8" stroke-width="1.200"/>
<text x="1567" y="625" class="b" style="font-size:11.500px;fill:#b4b4b4" textLength="110" lengthAdjust="spacingAndGlyphs">UV transformations</text>
<text class="n" x="1565" y="654" textLength="25" lengthAdjust="spacingAndGlyphs">Scale</text>
<rect x="1633" y="649" width="78" height="1" fill="#3e3e3e"/><rect x="1772" y="649" width="81" height="1" fill="#3e3e3e"/>
<text class="n" x="1704" y="646">1</text><text x="1843" y="646" style="font-size:11px;fill:#666">1</text>
<rect x="1611" y="658" width="61" height="2" fill="#d8d8d8"/><rect x="1672" y="658" width="42" height="2" fill="#555"/>
<circle cx="1672" cy="659" r="4.800" fill="#cfcfcf"/>
<rect x="1718" y="635" width="28" height="28" fill="#1c1c1c"/>
<path d="M1729 649V646A3 3 0 0 1 1735 646V649" fill="none" stroke="#ddd" stroke-width="1.500"/><rect x="1726" y="648" width="12" height="9" rx="1" fill="#ddd"/><circle cx="1732" cy="652" r="1.300" fill="#1c1c1c"/>
<rect x="1750" y="658" width="103" height="2" fill="#555"/><circle cx="1811" cy="659" r="4.800" fill="#6a6a6a"/>
<text class="n" x="1565" y="689" textLength="41" lengthAdjust="spacingAndGlyphs">Rotation</text>
<rect x="1775" y="684" width="78" height="1" fill="#3e3e3e"/><text class="n" x="1843" y="681">0</text>
<rect x="1611" y="693" width="242" height="2" fill="#555"/><circle cx="1616" cy="694" r="4.800" fill="#cfcfcf"/>
<text class="n" x="1565" y="724" textLength="31" lengthAdjust="spacingAndGlyphs">Offset</text>
<rect x="1611" y="728" width="100" height="2" fill="#d8d8d8"/>
<rect x="1552" y="755" width="320" height="1" fill="#282828"/>
<text x="1551" y="775" class="b" style="font-size:11px;fill:#c0c0c0" textLength="58" lengthAdjust="spacingAndGlyphs">MATERIAL</text>
<rect x="1551.500" y="789.500" width="41" height="19" fill="#242424" stroke="#1b86f0"/>
<text x="1558" y="804" class="b" style="font-size:11.500px;fill:#e8e8e8" textLength="28" lengthAdjust="spacingAndGlyphs">color</text>
<rect x="1616.500" y="789.500" width="41" height="19" fill="#242424" stroke="#1b86f0"/>
<text x="1620" y="804" class="b" style="font-size:11.500px;fill:#e8e8e8">me</text>
<rect x="1551" y="819" width="302" height="32" fill="#4a4a4a"/>
<rect x="1552" y="876" width="320" height="1" fill="#282828"/>
<rect x="1551" y="892" width="302" height="32" fill="#4a4a4a"/>
<rect x="1551" y="928" width="302" height="23" fill="#3e3e3e"/>
<rect x="1554" y="931" width="296" height="17" fill="#ffb900"/>
<rect x="1551" y="971" width="302" height="32" fill="#4d4d4d"/>
<text x="1680" y="987" class="b" style="font-size:11.500px;fill:#b8b8b8" textLength="45" lengthAdjust="spacingAndGlyphs">Metallic</text>
<text x="1670" y="1000" style="font-size:11px;fill:#b0b0b0" textLength="62" lengthAdjust="spacingAndGlyphs">uniform color</text>

<!-- popup -->
<rect x="1640" y="698" width="279" height="250" fill="#000" opacity=".25"/>
<rect x="1635.500" y="693.500" width="283" height="249" fill="#393939" stroke="#262626"/>
<rect x="1645" y="702" width="73" height="24" fill="#ffb900"/>
<rect x="1723" y="701" width="26" height="26" fill="#4e4e4e"/>
<path d="M1729 722 1739 711 1742 714 1732 724 1729 724Z" fill="none" stroke="#ddd" stroke-width="1.100"/><path d="M1740 707 1745 706 1746 709 1743 712Z" fill="#ddd"/>
<rect x="1853" y="701" width="58" height="26" fill="#2d2d2d"/>
<text x="1861" y="719" style="font-size:11.500px;fill:#c4c4c4" textLength="40" lengthAdjust="spacingAndGlyphs">dynamic</text>
<rect x="1645" y="732" width="148" height="168" fill="url(#svH)"/>
<rect x="1645" y="732" width="148" height="168" fill="url(#svV)"/>
<path d="M1782 732.500H1794M1792 733V741" stroke="#000" stroke-width="2"/>
<rect x="1811" y="732" width="7" height="168" fill="url(#hue)"/><circle cx="1815" cy="886" r="5" fill="#f58a12"/>
<rect x="1850" y="732" width="7" height="168" fill="url(#sat)"/><circle cx="1854" cy="736" r="5" fill="#e78a30"/>
<rect x="1889" y="732" width="7" height="168" fill="url(#val)"/><circle cx="1893" cy="736" r="5" fill="#e78a30"/>
<g>
<text class="v" x="1667" y="914">R</text><text class="v" x="1706" y="914">G</text><text class="v" x="1744" y="914">B</text><text class="v" x="1815" y="914">H</text><text class="v" x="1854" y="914">S</text><text class="v" x="1893" y="914">V</text>
<rect x="1650" y="918" width="35" height="16" fill="#2c2c2c"/><rect x="1689" y="918" width="35" height="16" fill="#2c2c2c"/><rect x="1728" y="918" width="35" height="16" fill="#2c2c2c"/>
<rect x="1798" y="918" width="35" height="16" fill="#2c2c2c"/><rect x="1837" y="918" width="35" height="16" fill="#2c2c2c"/><rect x="1876" y="918" width="35" height="16" fill="#2c2c2c"/>
<text class="v" x="1667" y="931">1.000</text><text class="v" x="1706" y="931">0.503</text><text class="v" x="1745" y="931">0.000</text>
<text class="v" x="1815" y="931">0.084</text><text class="v" x="1854" y="931">1.000</text><text class="v" x="1893" y="931">1.000</text>
<rect x="1767" y="906" width="27" height="26" fill="#4c4c4c"/><text class="v" x="1780" y="925">&gt;</text>
</g>

<!-- status bar -->
<rect y="1007" width="1920" height="1" fill="#1e1e1e"/>
<rect y="1008" width="1920" height="18" fill="#333"/>
<text x="2" y="1024" style="font-size:11.500px;fill:#f5ab00" textLength="877" lengthAdjust="spacingAndGlyphs">[GPUIssuesCheck] The current TDR (GPU hang recovery) delay is low: 2s. Substance Painter can be interrupted by the OS when doing a long computation. See https://docs.substan...</text>
<text x="1783" y="1024" style="font-size:11.500px;fill:#b0b0b0" textLength="89" lengthAdjust="spacingAndGlyphs">Cache Disk Usage:</text>
<text x="1886" y="1024" style="font-size:11.500px;fill:#b0b0b0" textLength="23" lengthAdjust="spacingAndGlyphs">45%</text>
</svg>
</body></html>
